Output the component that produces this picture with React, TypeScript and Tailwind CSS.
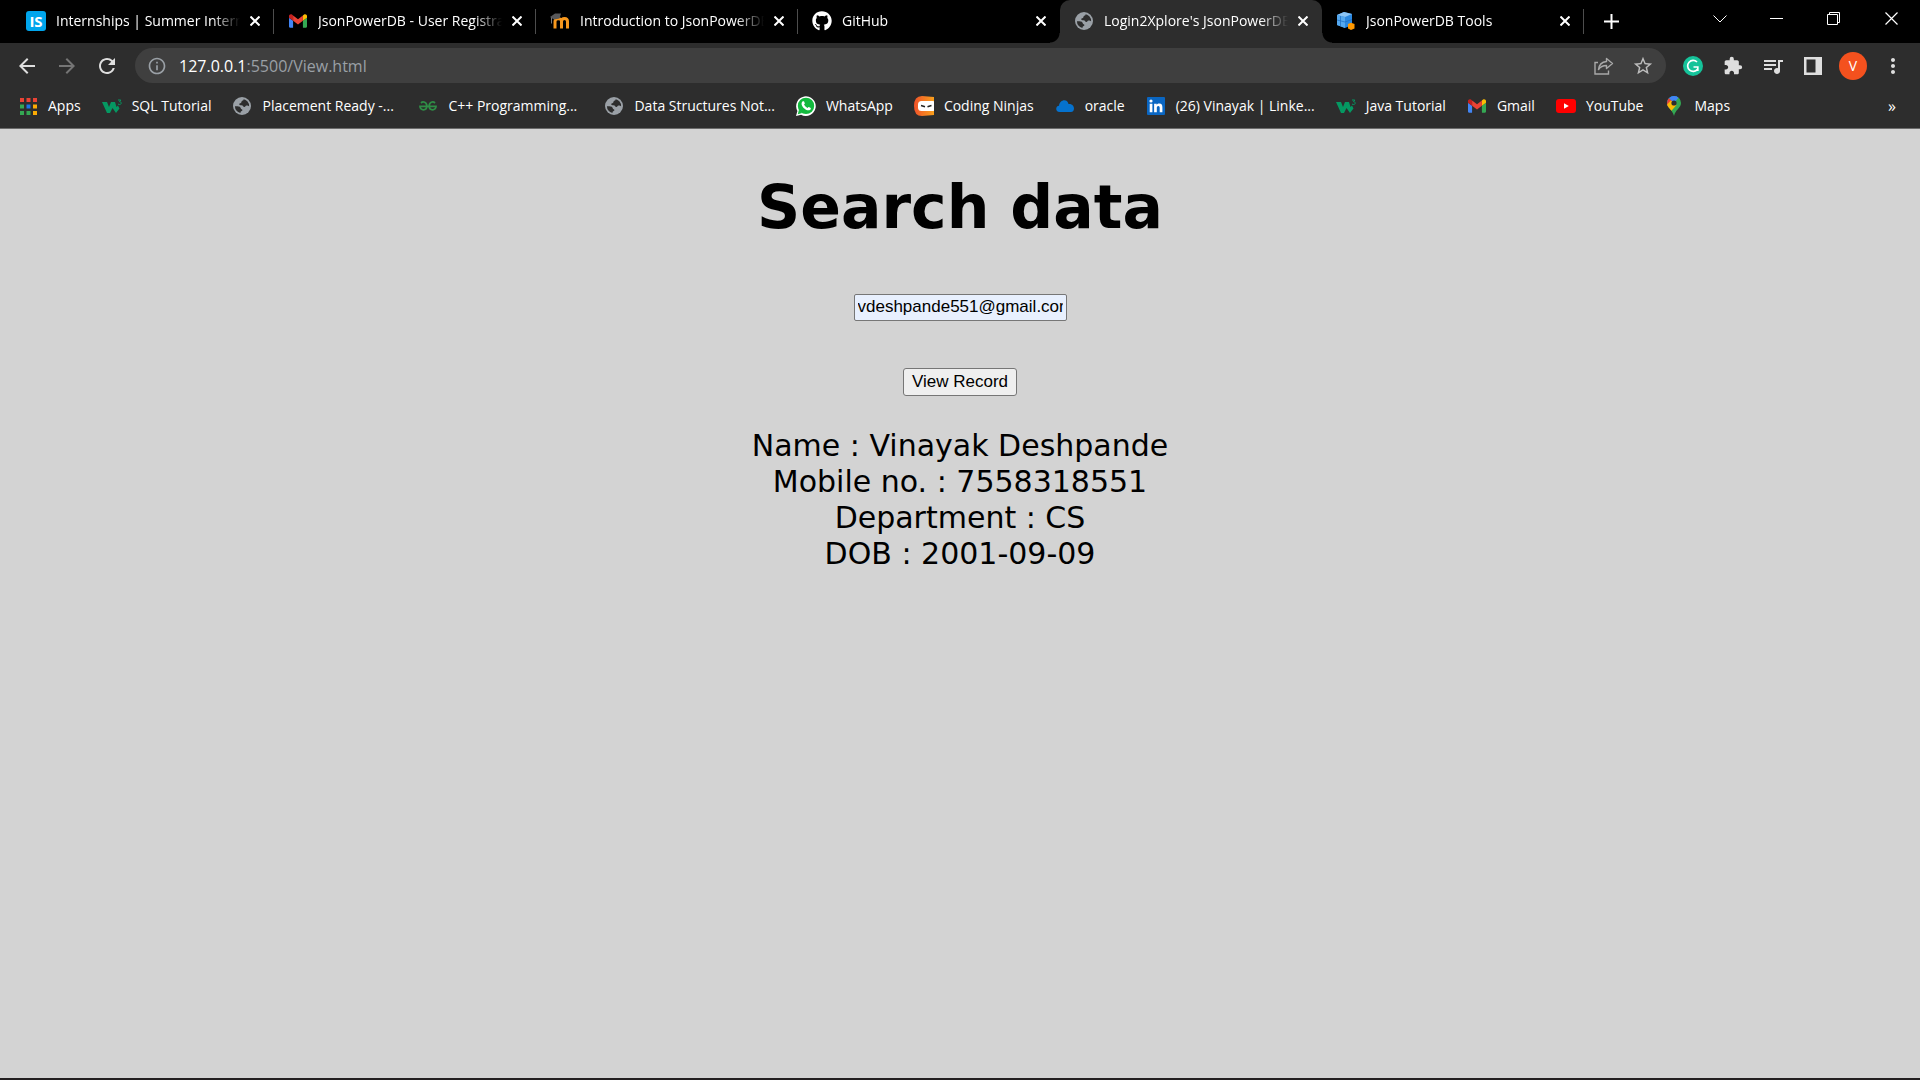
import React from "react";
import { FaGithub } from "react-icons/fa";
import {
  MdArrowBack,
  MdArrowForward,
  MdRefresh,
  MdInfoOutline,
  MdStarOutline,
  MdExtension,
  MdMoreVert,
  MdQueueMusic,
} from "react-icons/md";

type IconProps = { className?: string };

const Globe = () => (
  <svg viewBox="0 0 18 18" className="size-[18px]" aria-hidden="true">
    <circle cx="9" cy="9" r="9" fill="#9aa0a6" />
    <path
      d="M9.6 1.9C11 2 10.9 3 9.700 3.500C8.400 4 8.500 4.800 8.300 5.500C8 6.500 6.500 6 6.200 7C6 8 7.200 8.200 8.500 8.200C10.200 8.200 10 9.800 11.200 10C12.600 10.200 12.300 8.600 13.500 8.500C14.700 8.400 15.300 9 16.100 9.300A7.100 7.100 0 0 0 9.600 1.900Z"
      fill="#2d2d2d"
    />
    <path
      d="M1.900 9.300C3.500 9.200 5.800 9.100 6.900 9.900C8.300 11 7.500 11.900 8.700 12.300C10 12.700 9.500 14 8.300 14.300C7.500 14.500 7.600 15.400 7.400 15.900A7.100 7.100 0 0 1 1.900 9.300Z"
      fill="#2d2d2d"
    />
  </svg>
);

const GmailLogo = () => (
  <svg viewBox="52 42 88 66" className="h-[14px] w-[18px]" aria-hidden="true">
    <path fill="#4285f4" d="M58 108h14V74L52 59v43c0 3.320 2.690 6 6 6" />
    <path fill="#34a853" d="M120 108h14c3.320 0 6-2.690 6-6V59l-20 15" />
    <path fill="#fbbc04" d="M120 48v26l20-15v-8c0-7.420-8.470-11.650-14.400-7.200" />
    <path fill="#ea4335" d="M72 74V48l24 18 24-18v26L96 92" />
    <path fill="#c5221f" d="M52 51v8l20 15V48l-5.600-4.200c-5.940-4.450-14.400-.22-14.400 7.200" />
  </svg>
);

const InternshalaLogo = () => (
  <span className="flex size-5 items-center justify-center rounded-[3px] bg-[#00a5ec] font-['Open_Sans',sans-serif] text-[15px] leading-5 font-bold text-white">
    IS
  </span>
);

const MoodleLogo = () => (
  <svg viewBox="0 0 20 16" className="h-4 w-5" aria-hidden="true">
    <path
      d="M5 15.500V8.500M11.500 15.500V8C11.500 5 5 5 5 8.500M11.500 8.500C11.500 4.500 17.500 4.500 17.500 8.500V15.500"
      fill="none"
      stroke="#f8981d"
      strokeWidth="3"
    />
    <path d="M0 4L5 .5L11 .5L9.500 5.500L4 6.500Z" fill="#58585a" />
    <path d="M1.500 4.500V10.500" stroke="#77777a" strokeWidth="1" />
  </svg>
);

const DatabaseLogo = () => (
  <svg viewBox="0 0 18 18" className="size-[18px]" aria-hidden="true">
    <path d="M0 3L7 0L15 2V13L8 16L0 13Z" fill="#2b88e0" />
    <path d="M0 3L7 0L15 2L8 5Z" fill="#8cc5f5" />
    <path d="M0 3L8 5V16L0 13Z" fill="#55a8ee" />
    <path d="M3.500 4V14M0 8L8 10L15 7.500" stroke="#1c6cc0" strokeWidth=".7" fill="none" />
    <path d="M11 12L14 10.800L17.500 12V16.500L14 18L11 16.500Z" fill="#ff9800" />
  </svg>
);

const AppsLogo = () => (
  <svg viewBox="0 0 17 17" className="size-[17px]" aria-hidden="true">
    <path d="M0 0h4v4H0zM6.500 0h4v4h-4zM13 0h4v4h-4z" fill="#ea4335" />
    <path d="M0 6.500h4v4H0zM0 13h4v4H0zM6.500 13h4v4h-4z" fill="#34a853" />
    <path d="M6.500 6.500h4v4h-4z" fill="#1a73e8" />
    <path d="M13 6.500h4v4h-4zM13 13h4v4h-4z" fill="#fbab04" />
  </svg>
);

const W3Logo = () => (
  <svg viewBox="0 0 20 15" className="h-[15px] w-5" aria-hidden="true">
    <path d="M0 3H5L7 8L9 3H13L14.500 8L16 6.500L17.500 9.500L14 14L10.500 9L8 14H5Z" fill="#059862" />
    <path
      d="M16 1H18.800L17.500 2.700C19.800 2.700 19.800 5.500 17.500 5.500L16 5.100"
      fill="none"
      stroke="#059862"
      strokeWidth="1"
    />
  </svg>
);

const GfgLogo = () => (
  <svg viewBox="0 0 18 10" className="h-[10px] w-[18px]" aria-hidden="true">
    <path
      d="M2 2C4 0 7.800 1 7.800 5C7.800 10 1 10 1 5.300H17C17 10 10.200 10 10.200 5C10.200 1 14 0 16 2"
      fill="none"
      stroke="#2f8d46"
      strokeWidth="1.800"
    />
  </svg>
);

const WhatsAppLogo = () => (
  <svg viewBox="0 0 20 20" className="size-5" aria-hidden="true">
    <path d="M0 20L1.400 15A9.800 9.800 0 1 1 5.100 18.700Z" fill="#fff" />
    <circle cx="10" cy="9.900" r="8.200" fill="#12b93d" />
    <path d="M1.800 18.200L3 13.500L6.200 17Z" fill="#12b93d" />
    <path
      d="M6.800 5.300C7.400 5 7.900 5.100 8.100 5.600L8.800 7.200C8.900 7.800 8.300 8.200 8 8.600C8.800 10.200 10 11.300 11.600 12C12 11.600 12.400 10.800 12.900 11L14.700 11.900C15.100 12.300 14.600 13.600 13.900 14C10.500 15.600 5 10.500 5.600 7.200C5.700 6.500 6.200 5.700 6.800 5.300Z"
      fill="#fff"
    />
  </svg>
);

const NinjaLogo = () => (
  <svg viewBox="0 0 20 20" className="size-5" aria-hidden="true">
    <defs>
      <linearGradient id="ninja" x1="0" x2="1">
        <stop offset="0" stopColor="#f0522a" />
        <stop offset="1" stopColor="#f8a01c" />
      </linearGradient>
    </defs>
    <path d="M20 1L8 0Q0 0 0 10Q0 20 8 20L20 19Z" fill="url(#ninja)" />
    <rect x="4" y="5" width="18" height="10" rx="3.500" fill="#fff" />
    <path d="M7 9.500L11 10.700M13.500 10.700L17.500 9.500" fill="none" stroke="#222" strokeWidth="1.500" />
  </svg>
);

const CloudLogo = () => (
  <svg viewBox="0 0 18 12" className="h-3 w-[18px]" aria-hidden="true">
    <path d="M3.500 12C-.8 12-.8 6 3 5.800C3.500 0 11-2 12.500 4C16 3.500 18 6 18 8.500C18 11 16.500 12 15 12Z" fill="#0572ce" />
  </svg>
);

const LinkedInLogo = () => (
  <svg viewBox="0 0 18 18" className="size-[18px]" aria-hidden="true">
    <rect width="18" height="18" rx="1" fill="#0a66c2" />
    <circle cx="4" cy="4" r="1.600" fill="#fff" />
    <path
      d="M2.700 6.800H5.400V15.200H2.700ZM7.100 6.800H9.700V8C10.200 7.100 11.200 6.600 12.300 6.600C14.700 6.600 15.400 8.200 15.400 10.500V15.200H12.700V11C12.700 9.900 12.500 8.900 11.300 8.900C10.100 8.900 9.800 9.900 9.800 11V15.200H7.100Z"
      fill="#fff"
    />
  </svg>
);

const YouTubeLogo = () => (
  <svg viewBox="0 0 20 14" className="h-[14px] w-5" aria-hidden="true">
    <rect width="20" height="14" rx="3" fill="#f00" />
    <path d="M8 4.200V9.800L12.800 7Z" fill="#fff" />
  </svg>
);

const MapsLogo = () => (
  <svg viewBox="0 0 14 20" className="h-5 w-[14px]" aria-hidden="true">
    <defs>
      <clipPath id="pin">
        <path d="M7 0A7 7 0 0 0 0 7C0 12 5.500 13.500 7 20C8.500 13.500 14 12 14 7A7 7 0 0 0 7 0Z" />
      </clipPath>
    </defs>
    <g clipPath="url(#pin)">
      <rect width="14" height="20" fill="#34a853" />
      <path d="M0 13.500L13 -2H0Z" fill="#1a73e8" />
      <path d="M2 2L7 6.500L-2 16L-2 0Z" fill="#ea4335" />
      <path d="M-1 9.500L4 4.500L9.500 9L2.500 17Z" fill="#fbbc04" />
      <path d="M7 7L13 0L8 -2L2 2Z" fill="#4285f4" />
    </g>
    <circle cx="7" cy="7" r="2.600" fill="#2d2d2d" />
  </svg>
);

const ShareIcon = ({ className }: IconProps) => (
  <svg viewBox="0 0 20 18" className={className} fill="none" stroke="currentColor" strokeWidth="1.400" aria-hidden="true">
    <path d="M4 5.500H1V17H14.500V13.500" />
    <path d="M12.500 1.500L18.500 6.500L12.500 11.500V8.500C9 8.500 6.500 9.500 4.500 12.500C5 8 8 5 12.500 4.500Z" strokeLinejoin="round" />
  </svg>
);

const SidePanelIcon = () => (
  <svg viewBox="0 0 18 18" className="size-[18px]" aria-hidden="true">
    <path d="M0 0H18V18H0ZM2.500 2.500V15.500H11.500V2.500Z" fill="#dedede" fillRule="evenodd" />
  </svg>
);

const GrammarlyIcon = () => (
  <svg viewBox="0 0 20 20" className="size-5" aria-hidden="true">
    <circle cx="10" cy="10" r="10" fill="#15c39a" />
    <path d="M14 6A5.500 5.500 0 1 0 14.500 13.300M10.500 11H14.800V15" fill="none" stroke="#fff" strokeWidth="1.700" />
  </svg>
);

const CloseIcon = () => (
  <svg viewBox="0 0 10 10" className="size-[10px]" stroke="currentColor" strokeWidth="2" aria-hidden="true">
    <path d="M.5 .5L9.500 9.500M9.500 .5L.5 9.500" />
  </svg>
);

const tabs = [
  { title: "Internships | Summer Internship", icon: <InternshalaLogo /> },
  { title: "JsonPowerDB - User Registration", icon: <GmailLogo /> },
  { title: "Introduction to JsonPowerDB", icon: <MoodleLogo /> },
  { title: "GitHub", icon: <FaGithub className="size-5 text-white" /> },
  { title: "Login2Xplore's JsonPowerDB", icon: <Globe />, active: true },
  { title: "JsonPowerDB Tools", icon: <DatabaseLogo /> },
];

const bookmarks = [
  { label: "Apps", icon: <AppsLogo /> },
  { label: "SQL Tutorial", icon: <W3Logo /> },
  { label: "Placement Ready -...", icon: <Globe />, long: true },
  { label: "C++ Programming...", icon: <GfgLogo />, long: true },
  { label: "Data Structures Not...", icon: <Globe />, long: true },
  { label: "WhatsApp", icon: <WhatsAppLogo /> },
  { label: "Coding Ninjas", icon: <NinjaLogo /> },
  { label: "oracle", icon: <CloudLogo /> },
  { label: "(26) Vinayak | Linke...", icon: <LinkedInLogo />, long: true },
  { label: "Java Tutorial", icon: <W3Logo /> },
  { label: "Gmail", icon: <GmailLogo /> },
  { label: "YouTube", icon: <YouTubeLogo /> },
  { label: "Maps", icon: <MapsLogo /> },
];

const TabStrip = () => (
  <div className="flex h-[43px] bg-black pl-3">
    {tabs.map((tab, i) => (
      <div
        key={tab.title}
        className={
          tab.active
            ? "relative flex w-[262px] items-center rounded-t-[10px] bg-[#2d2d2d] pr-[14px] pb-px pl-[14px]"
            : "relative flex w-[262px] items-center pr-[14px] pb-px pl-[14px]"
        }
      >
        {tab.active && (
          <>
            <span className="absolute bottom-0 -left-[10px] size-[10px] bg-[radial-gradient(circle_at_0_0,#000_9px,#2d2d2d_10px)]" />
            <span className="absolute -right-[10px] bottom-0 size-[10px] bg-[radial-gradient(circle_at_100%_0,#000_9px,#2d2d2d_10px)]" />
          </>
        )}
        <span className="flex w-5 shrink-0 justify-center">{tab.icon}</span>
        <span className="mr-[10px] ml-[10px] flex-1 overflow-hidden mask-r-from-85% mask-r-to-100% pb-px text-sm whitespace-nowrap text-white">
          {tab.title}
        </span>
        <button type="button" aria-label={`Close ${tab.title}`} className="text-white">
          <CloseIcon />
        </button>
        {!tab.active && !tabs[i + 1]?.active && (
          <span className="absolute top-[9px] right-0 h-[25px] w-px bg-[#4d4d4d]" />
        )}
      </div>
    ))}
    <button type="button" aria-label="New tab" className="ml-5 text-white">
      <svg viewBox="0 0 15 15" className="size-[15px]" stroke="currentColor" strokeWidth="2" aria-hidden="true">
        <path d="M7.500 0V15M0 7.500H15" />
      </svg>
    </button>
    <div className="ml-auto flex h-[37px] text-white">
      <button type="button" aria-label="Search tabs" className="flex w-[57px] items-center justify-center">
        <svg viewBox="0 0 14 8" className="h-2 w-[14px]" fill="none" stroke="currentColor" aria-hidden="true">
          <path d="M.5 .5L7 7L13.500 .5" />
        </svg>
      </button>
      <button type="button" aria-label="Minimize" className="flex w-[57px] items-center justify-center">
        <svg viewBox="0 0 13 1" className="h-px w-[13px]" aria-hidden="true">
          <path d="M0 0H13V1H0Z" fill="currentColor" />
        </svg>
      </button>
      <button type="button" aria-label="Restore" className="flex w-[57px] items-center justify-center">
        <svg viewBox="0 0 13 13" className="size-[13px]" fill="none" stroke="currentColor" aria-hidden="true">
          <path d="M.5 2.500H10.500V12.500H.5ZM2.500 2V.5H12.500V10.500H11" />
        </svg>
      </button>
      <button type="button" aria-label="Close window" className="flex w-[58px] items-center justify-center">
        <svg viewBox="0 0 13 13" className="size-[13px]" stroke="currentColor" strokeWidth="1.200" aria-hidden="true">
          <path d="M.5 .5L12.500 12.500M12.500 .5L.5 12.500" />
        </svg>
      </button>
    </div>
  </div>
);

const Toolbar = () => (
  <div className="flex h-[45px] items-center px-[7px] text-[#dedede]">
    <button type="button" aria-label="Back" className="flex w-10 justify-center">
      <MdArrowBack className="size-6" />
    </button>
    <button type="button" aria-label="Forward" className="flex w-10 justify-center text-[#757575]">
      <MdArrowForward className="size-6" />
    </button>
    <button type="button" aria-label="Reload" className="flex w-10 justify-center">
      <MdRefresh className="size-6" />
    </button>
    <div className="ml-2 flex h-[35px] flex-1 items-center rounded-full bg-[#3f3f3f] pr-3 pl-3">
      <MdInfoOutline className="size-5 text-[#9aa0a6]" />
      <p className="ml-3 flex-1 text-base text-[#9aa0a6]">
        <span className="text-white">127.0.0.1</span>:5500/View.html
      </p>
      <button type="button" aria-label="Share this page" className="flex w-10 justify-center text-[#a9a9a9]">
        <ShareIcon className="h-[18px] w-5" />
      </button>
      <button type="button" aria-label="Bookmark this page" className="ml-2 text-[#bdbdbd]">
        <MdStarOutline className="size-[22px]" />
      </button>
    </div>
    <div className="ml-[7px] flex items-center">
      <button type="button" aria-label="Grammarly" className="flex w-10 justify-center">
        <GrammarlyIcon />
      </button>
      <button type="button" aria-label="Extensions" className="flex w-10 justify-center">
        <MdExtension className="size-5" />
      </button>
      <button type="button" aria-label="Media controls" className="flex w-10 justify-center">
        <MdQueueMusic className="size-6" />
      </button>
      <button type="button" aria-label="Side panel" className="flex w-10 justify-center">
        <SidePanelIcon />
      </button>
      <button type="button" aria-label="Profile" className="flex w-10 justify-center">
        <span className="flex size-7 items-center justify-center rounded-full bg-[#f4511e] text-sm text-white">V</span>
      </button>
      <button type="button" aria-label="Menu" className="flex w-10 justify-center">
        <MdMoreVert className="size-6" />
      </button>
    </div>
  </div>
);

const BookmarksBar = () => (
  <nav className="flex h-[41px] items-center gap-[21px] border-b border-[#6b6b6b] pr-6 pb-1 pl-[18px]">
    {bookmarks.map((b) => (
      <a key={b.label} href="#" className="flex items-center gap-[10px] text-sm whitespace-nowrap text-white">
        <span className="flex w-5 shrink-0 justify-center">{b.icon}</span>
        <span className={b.long ? "min-w-[135px]" : ""}>{b.label}</span>
      </a>
    ))}
    <button type="button" aria-label="More bookmarks" className="ml-auto text-base text-white">
      »
    </button>
  </nav>
);

export default function App() {
  return (
    <div className="flex min-h-screen flex-col border-b-2 border-[#231f20] bg-[#d3d3d3]">
      <header className="bg-[#2d2d2d] font-['Open_Sans','Noto_Sans',sans-serif]">
        <TabStrip />
        <Toolbar />
        <BookmarksBar />
      </header>
      <main className="flex flex-1 flex-col items-center pt-10 font-['Verdana','DejaVu_Sans',sans-serif] text-black">
        <h1 className="text-[60px] leading-[76px] font-bold">Search data</h1>
        <input
          type="email"
          aria-label="Email"
          defaultValue="vdeshpande551@gmail.com"
          className="mt-[49px] h-[27px] w-[213px] rounded-[2px] border border-[#767676] bg-[#e8f0fe] pr-[3px] pb-px pl-[3px] font-['Liberation_Sans',Arial,sans-serif] text-[17px]"
        />
        <button
          type="button"
          className="mt-[47px] h-7 rounded-[3px] border border-[#767676] bg-[#efefef] px-2 font-['Liberation_Sans',Arial,sans-serif] text-[17px]"
        >
          View Record
        </button>
        <div className="mt-8 text-center text-[30px] leading-9">
          <p>Name : Vinayak Deshpande</p>
          <p>Mobile no. : 7558318551</p>
          <p>Department : CS</p>
          <p>DOB : 2001-09-09</p>
        </div>
      </main>
    </div>
  );
}
